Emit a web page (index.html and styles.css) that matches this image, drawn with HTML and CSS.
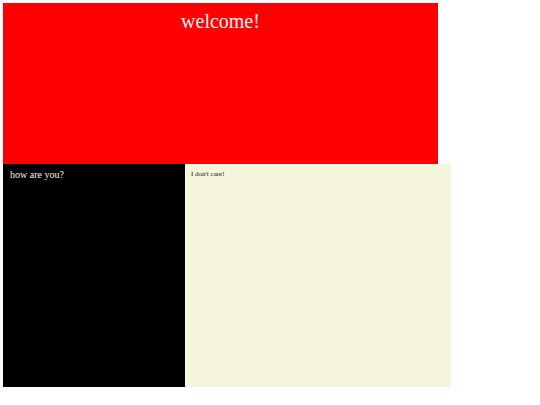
FILE: index.html
```html
<!DOCTYPE html>
<html>
<head>
<meta charset="utf-8">
<link rel="stylesheet" href="styles.css">
</head>
<body>
<div class="page">
  <header class="banner"><h1 class="title">welcome!</h1></header>
  <div class="row">
    <aside class="side"><p class="ask">how are you?</p></aside>
    <main class="main"><p class="reply">I don't care!</p></main>
  </div>
</div>
</body>
</html>
```
FILE: styles.css
```css
html, body { margin: 0; padding: 0; background: #fff; }
body { font-family: "Liberation Serif", "Times New Roman", serif; }
.page { padding: 3px; }
.banner { width: 435px; height: 161px; background: #ff0000; }
.title { margin: 0; padding-top: 6px; text-align: center; font-size: 20px; font-weight: normal; color: #f4f4f4; line-height: 1.2; }
.row { display: flex; height: 223px; }
.side { width: 182px; background: #000; color: #f4f4f4; padding: 5px 7px; box-sizing: border-box; }
.ask { margin: 0; font-size: 10px; }
.main { width: 266px; background: #f5f5dc; padding: 6px 6px; box-sizing: border-box; }
.reply { margin: 0; font-size: 7px; color: #111; }
```
